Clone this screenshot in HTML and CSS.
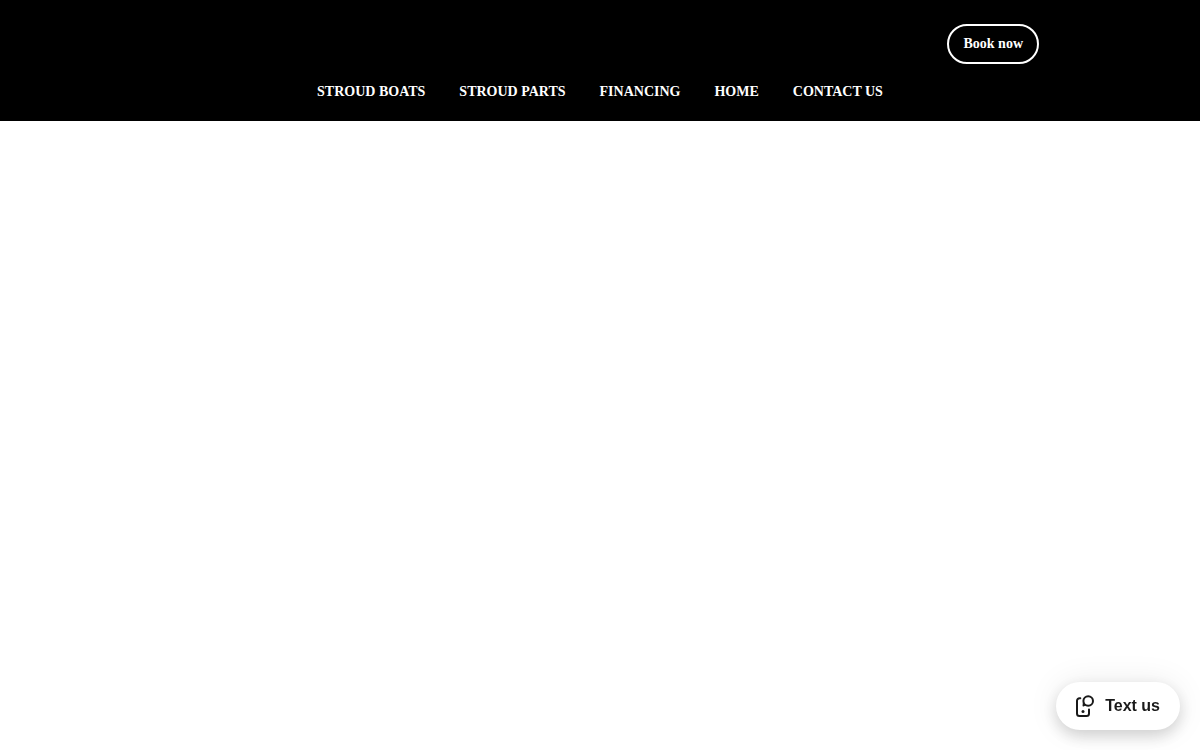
FILE: index.html
```html
<!DOCTYPE html>
<html lang="en">
<head>
<meta charset="UTF-8">
<meta name="viewport" content="width=device-width, initial-scale=1.0">
<title>Stroud Boats</title>
<link rel="stylesheet" href="styles.css">
</head>
<body>
  <header class="header">
    <div class="header-top">
      <button type="button" class="book-button">Book now</button>
    </div>
    <nav class="nav">
      <a href="#boats">STROUD BOATS</a>
      <a href="#parts">STROUD PARTS</a>
      <a href="#financing">FINANCING</a>
      <a href="#home">HOME</a>
      <a href="#contact">CONTACT US</a>
    </nav>
  </header>

  <main></main>

  <button type="button" class="text-button">
    <svg width="24" height="24" viewBox="0 0 24 24" fill="none" stroke="currentColor" stroke-width="2" stroke-linecap="round" stroke-linejoin="round" aria-hidden="true">
      <path d="M8.300 4.300H7.500A2.500 2.500 0 0 0 5 6.800V19.500A2.500 2.500 0 0 0 7.500 22H14.500A2.500 2.500 0 0 0 17 19.500V15.500"/>
      <circle cx="16.200" cy="7" r="4.800"/>
      <path d="M11.600 8.500L11.300 11.700L13.400 10.900" stroke-width="1.500"/>
      <circle cx="11" cy="17.400" r="1.500" fill="currentColor" stroke="none"/>
    </svg>
    Text us
  </button>
</body>
</html>
```

FILE: styles.css
```css
body {
  margin: 0;
  background: #fff;
  font-family: "Liberation Serif", "Times New Roman", serif;
}
.header {
  padding: 24px 0 19px;
  background: #000;
}
.header-top {
  display: flex;
  justify-content: flex-end;
  max-width: 878px;
  margin: 0 auto 18px;
}
.book-button {
  height: 40px;
  padding: 0 14px;
  border: 2px solid #fff;
  border-radius: 20px;
  background: transparent;
  color: #fff;
  font-family: inherit;
  font-size: 14px;
  font-weight: bold;
  cursor: pointer;
}
.nav {
  display: flex;
  justify-content: center;
  gap: 34px;
}
.nav a {
  color: #fff;
  font-size: 14px;
  font-weight: bold;
  line-height: 20px;
  text-decoration: none;
}
.text-button {
  position: fixed;
  right: 20px;
  bottom: 20px;
  display: flex;
  align-items: center;
  gap: 9px;
  height: 48px;
  padding: 0 20px 0 16px;
  border: none;
  border-radius: 24px;
  background: #fff;
  box-shadow: 0 6px 16px rgba(0, 0, 0, 0.16), 0 0 32px rgba(0, 0, 0, 0.08);
  color: #1a1a1a;
  font-family: "Liberation Sans", Arial, sans-serif;
  font-size: 16px;
  font-weight: bold;
  cursor: pointer;
}
```
